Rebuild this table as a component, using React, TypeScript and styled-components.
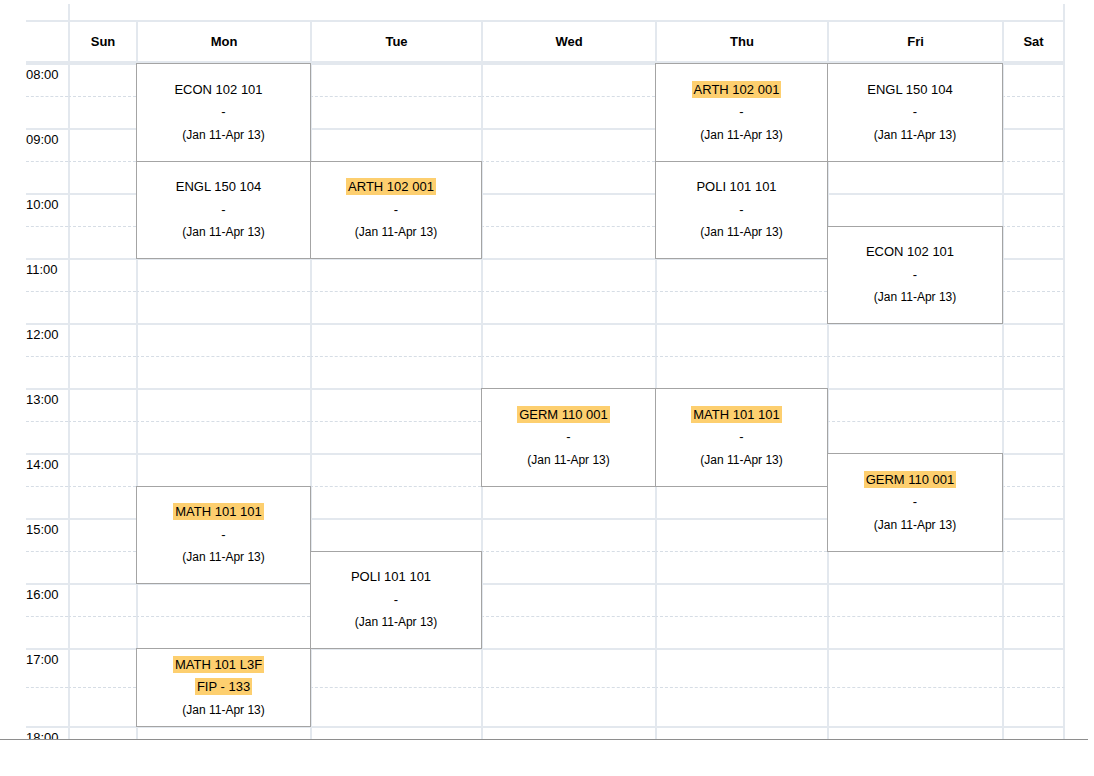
import * as React from "react";
import styled, { createGlobalStyle } from "styled-components";

type CalEvent = {
  day: number;
  start: number;
  end: number;
  title: string;
  room?: string;
  marked?: boolean;
};

const DAYS = ["Sun", "Mon", "Tue", "Wed", "Thu", "Fri", "Sat"];
const COLUMNS = [42, 68, 174, 171, 174, 172, 175, 63];
const FIRST_HOUR = 8;
const DATES = "(Jan 11-Apr 13)";

// half-hour rows; the 17:00 hour is stretched by the taller lab block
const ROWS = Array.from({ length: 22 }, (_, i) => (i === 18 || i === 19 ? 39 : 32.5));

const EVENTS: CalEvent[] = [
  { day: 1, start: 8, end: 9.5, title: "ECON 102 101" },
  { day: 1, start: 9.5, end: 11, title: "ENGL 150 104" },
  { day: 1, start: 14.5, end: 16, title: "MATH 101 101", marked: true },
  { day: 1, start: 17, end: 18, title: "MATH 101 L3F", room: "FIP - 133", marked: true },
  { day: 2, start: 9.5, end: 11, title: "ARTH 102 001", marked: true },
  { day: 2, start: 15.5, end: 17, title: "POLI 101 101" },
  { day: 3, start: 13, end: 14.5, title: "GERM 110 001", marked: true },
  { day: 4, start: 8, end: 9.5, title: "ARTH 102 001", marked: true },
  { day: 4, start: 9.5, end: 11, title: "POLI 101 101" },
  { day: 4, start: 13, end: 14.5, title: "MATH 101 101", marked: true },
  { day: 5, start: 8, end: 9.5, title: "ENGL 150 104" },
  { day: 5, start: 10.5, end: 12, title: "ECON 102 101" },
  { day: 5, start: 14, end: 15.5, title: "GERM 110 001", marked: true },
];

const GlobalStyle = createGlobalStyle`
  html, body {
    margin: 0;
    background: #fff;
  }
  body {
    font-family: "Liberation Sans", Arial, sans-serif;
    color: #000;
  }
`;

const Viewport = styled.div`
  box-sizing: border-box;
  width: 1088px;
  height: 740px;
  padding: 4px 0 0 26px;
  overflow: hidden;
  border-bottom: 1px solid #8e8e8e;
`;

const Grid = styled.div`
  display: grid;
  grid-template-columns: ${COLUMNS.map((w) => `${w}px`).join(" ")};
  grid-template-rows: 16px 43px ${ROWS.map((h) => `${h}px`).join(" ")};
`;

const TopStrip = styled.div`
  grid-column: 2 / -1;
  grid-row: 1;
  box-sizing: border-box;
  border-left: 2px solid #e3e8ee;
  border-right: 2px solid #e3e8ee;
`;

const HeadCell = styled.div<{ $day?: boolean; $last?: boolean }>`
  grid-row: 2;
  box-sizing: border-box;
  display: flex;
  align-items: center;
  justify-content: center;
  border-top: 2px solid #e3e8ee;
  border-bottom: 2px solid #e3e8ee;
  border-left: ${(p) => (p.$day ? "2px solid #e3e8ee" : "none")};
  border-right: ${(p) => (p.$last ? "2px solid #e3e8ee" : "none")};
  font-size: 13px;
  font-weight: bold;
`;

const Slot = styled.div<{ $hour: boolean; $day: boolean; $last: boolean }>`
  box-sizing: border-box;
  border-top: ${(p) => (p.$hour ? "2px solid #e3e8ee" : "1px dashed #d6dde5")};
  border-left: ${(p) => (p.$day ? "2px solid #e3e8ee" : "none")};
  border-right: ${(p) => (p.$last ? "2px solid #e3e8ee" : "none")};
`;

const TimeLabel = styled.div`
  padding-top: 2px;
  font-size: 13px;
  line-height: 15px;
`;

const EventBox = styled.div`
  box-sizing: border-box;
  margin-right: -1px;
  margin-bottom: -1px;
  background: #fff;
  border: 1px solid #a4a4a4;
  display: flex;
  flex-direction: column;
  align-items: center;
  justify-content: center;
`;

const Line = styled.div<{ $small?: boolean; $shift?: boolean }>`
  height: 22.5px;
  line-height: 22.5px;
  font-size: ${(p) => (p.$small ? "12px" : "13px")};
  padding-right: ${(p) => (p.$shift ? "10px" : "0")};
  white-space: nowrap;
`;

const Mark = styled.span<{ $on?: boolean }>`
  padding: 1px 2px;
  background: ${(p) => (p.$on ? "#fdcf6f" : "transparent")};
`;

const rowOf = (h: number) => (h - FIRST_HOUR) * 2 + 3;

function Event({ ev }: { ev: CalEvent }) {
  return (
    <EventBox style={{ gridColumn: ev.day + 2, gridRow: `${rowOf(ev.start)} / ${rowOf(ev.end)}` }}>
      <Line $shift>
        <Mark $on={ev.marked}>{ev.title}</Mark>
      </Line>
      <Line>{ev.room ? <Mark $on={ev.marked}>{ev.room}</Mark> : "-"}</Line>
      <Line $small>{DATES}</Line>
    </EventBox>
  );
}

export default function App() {
  return (
    <>
      <GlobalStyle />
      <Viewport>
        <Grid>
          <TopStrip />
          <HeadCell style={{ gridColumn: 1 }} />
          {DAYS.map((d, i) => (
            <HeadCell key={d} $day $last={i === DAYS.length - 1} style={{ gridColumn: i + 2 }}>
              {d}
            </HeadCell>
          ))}
          {ROWS.map((_, r) =>
            COLUMNS.map((_, c) => (
              <Slot
                key={`${r}-${c}`}
                $hour={r % 2 === 0}
                $day={c > 0}
                $last={c === COLUMNS.length - 1}
                style={{ gridColumn: c + 1, gridRow: r + 3 }}
              >
                {c === 0 && r % 2 === 0 && (
                  <TimeLabel>{`${String(FIRST_HOUR + r / 2).padStart(2, "0")}:00`}</TimeLabel>
                )}
              </Slot>
            ))
          )}
          {EVENTS.map((ev, i) => (
            <Event key={i} ev={ev} />
          ))}
        </Grid>
      </Viewport>
    </>
  );
}
